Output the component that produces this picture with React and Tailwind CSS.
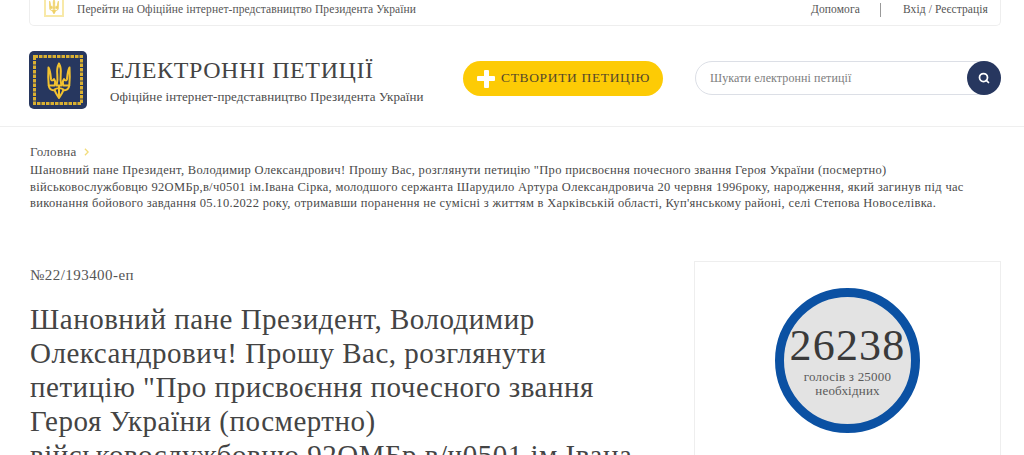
import React from "react";
import { Search } from "lucide-react";

const TridentPaths = () => (
  <>
    <path d="M12 1c-1.800 3.500-2.200 7-1.700 11 .4 3.500.3 7-.7 11h4.800c-1-4-1.100-7.500-.7-11 .5-4 .1-7.500-1.700-11Z" />
    <path d="M1.500 5c-.4 6.500-.4 12.500.2 18h6c.9-2.200.7-4.500-.7-6.500-1 1.800-2.500 1.800-3 .2-.5-4-.5-8-2.500-11.700Z" />
    <path d="M22.500 5c.4 6.500.4 12.500-.2 18h-6c-.9-2.200-.7-4.500.7-6.500 1 1.800 2.500 1.800 3 .2.500-4 .5-8 2.500-11.700Z" />
    <path d="M1.700 23c.4 3.500 3 5 6.300 5M22.300 23c-.4 3.500-3 5-6.300 5" />
    <path d="M7.500 27c.8 3.500 2.800 5.800 4.500 8.500 1.700-2.700 3.700-5 4.500-8.500-2.500-1.800-6.500-1.800-9 0ZM12 23v12.500" />
  </>
);

const Logo = () => (
  <svg viewBox="0 0 58 58" className="w-[58px] h-[58px] shrink-0">
    <rect width="58" height="58" rx="5" fill="#27375f" />
    <rect x="5.500" y="5.500" width="47" height="47" fill="none" stroke="#d9b032" strokeWidth="3" strokeDasharray="3.500 1" />
    <g transform="translate(18 11.500)" fill="none" stroke="#f2c230" strokeWidth="2" strokeLinejoin="round">
      <TridentPaths />
    </g>
  </svg>
);

const App = () => {
  return (
    <div
      className="h-[455px] overflow-hidden bg-white text-[#3f3f3f]"
      style={{ fontFamily: '"Liberation Serif", serif' }}
    >
      <div className="ml-[29px] mr-[23px] h-[26px] rounded-b-[5px] border border-t-0 border-[#eeeeee] flex items-center pr-[12px] pl-[14px] pb-[6px] text-[11.500px] text-[#555555] tracking-[0.1px]">
        <div className="w-[20px] h-[20px] border-2 border-[#f8e9a8] flex items-center justify-center mr-[13px] -mt-[6px]">
          <svg viewBox="0 0 24 36" className="w-[10px] h-[15px]" fill="#f0d268" stroke="#eecf62" strokeWidth="1.500">
            <TridentPaths />
          </svg>
        </div>
        <span>Перейти на Офіційне інтернет-представництво Президента України</span>
        <div className="ml-auto flex items-center">
          <span>Допомога</span>
          <span className="w-px h-[14px] bg-[#999999] ml-[20px] mr-[22px]" />
          <span>Вхід / Реєстрація</span>
        </div>
      </div>

      <header className="h-[101px] border-b border-[#efefef] pl-[29px] pr-[23px] pt-[25px] flex items-start">
        <Logo />
        <div className="ml-[23px] w-[331px] shrink-0">
          <h1 className="text-[24px] leading-[30px] mt-[4px] tracking-[0.6px] text-[#444444]">ЕЛЕКТРОННІ ПЕТИЦІЇ</h1>
          <p className="text-[13px] leading-[16px] mt-[4px] tracking-[0.07px] text-[#4c4c4c]">Офіційне інтернет-представництво Президента України</p>
        </div>
        <button className="ml-[22px] mt-[10px] w-[200px] h-[35px] rounded-full bg-[#fdcb05] flex items-center pl-[14px] text-[13.500px] tracking-[0.65px] text-[#55482a]">
          <span className="relative w-[18px] h-[18px] mr-[6px]">
            <span className="absolute left-[6.500px] top-0 w-[5px] h-[18px] rounded-[1px] bg-white" />
            <span className="absolute left-0 top-[6.500px] w-[18px] h-[5px] rounded-[1px] bg-white" />
          </span>
          СТВОРИТИ ПЕТИЦІЮ
        </button>
        <div className="ml-[32px] mt-[10px] flex-1 h-[34px] rounded-full border border-[#dcdfe6] relative flex items-center pl-[14px] text-[12px] tracking-[0.1px] text-[#7d7d7d]">
          Шукати електронні петиції
          <span className="absolute -right-px -top-px w-[34px] h-[34px] rounded-full bg-[#27375f] flex items-center justify-center">
            <Search size={12} strokeWidth={3.500} color="#ffffff" />
          </span>
        </div>
      </header>

      <div className="px-[30px] pt-[16px]">
        <div className="flex items-center h-[17px] text-[13px] tracking-[0.3px] text-[#505050]">
          Головна
          <svg viewBox="0 0 6 10" className="w-[5px] h-[8px] ml-[7px]" fill="none" stroke="#f2dc7a" strokeWidth="1.600">
            <path d="M1 1l4 4-4 4" />
          </svg>
        </div>
        <p className="text-[12.500px] leading-[16.500px] mt-[2px] w-[960px] tracking-[0.32px] text-[#4a4a4a]">
          <span className="block">Шановний пане Президент, Володимир Олександрович! Прошу Вас, розглянути петицію "Про присвоєння почесного звання Героя України (посмертно)</span>
          <span className="block">військовослужбовцю 92ОМБр,в/ч0501 ім.Івана Сірка, молодшого сержанта Шарудило Артура Олександровича 20 червня 1996року, народження, який загинув під час</span>
          <span className="block">виконання бойового завдання 05.10.2022 року, отримавши поранення не сумісні з життям в Харківській області, Куп'янському районі, селі Степова Новоселівка.</span>
        </p>
      </div>

      <main className="pl-[30px] pr-[23px] pt-[49px] flex items-start">
        <div className="w-[664px] shrink-0 pt-[5px]">
          <div className="text-[15px] leading-[18px] tracking-[0.45px] text-[#555555]">№22/193400-еп</div>
          <h2 className="text-[29px] leading-[34px] mt-[18px] tracking-[0.5px] text-[#444444]">
            <span className="block">Шановний пане Президент, Володимир</span>
            <span className="block">Олександрович! Прошу Вас, розглянути</span>
            <span className="block">петицію "Про присвоєння почесного звання</span>
            <span className="block">Героя України (посмертно)</span>
            <span className="block">військовослужбовцю 92ОМБр,в/ч0501 ім.Івана</span>
          </h2>
        </div>
        <aside className="w-[307px] h-[300px] border border-[#eeeeee] pt-[26px] flex justify-center">
          <div className="w-[145px] h-[145px] rounded-full border-[9px] border-[#0b51a3] bg-[#e3e3e3] flex flex-col items-center shrink-0">
            <div className="text-[44px] leading-[44px] mt-[27px] tracking-[1.200px] text-[#3a3a3a]">26238</div>
            <div className="text-[13px] leading-[14.500px] text-center mt-[2px] tracking-[0.2px] text-[#5a5a5a]">
              голосів з 25000
              <br />
              необхідних
            </div>
          </div>
        </aside>
      </main>
    </div>
  );
};

export default App;
